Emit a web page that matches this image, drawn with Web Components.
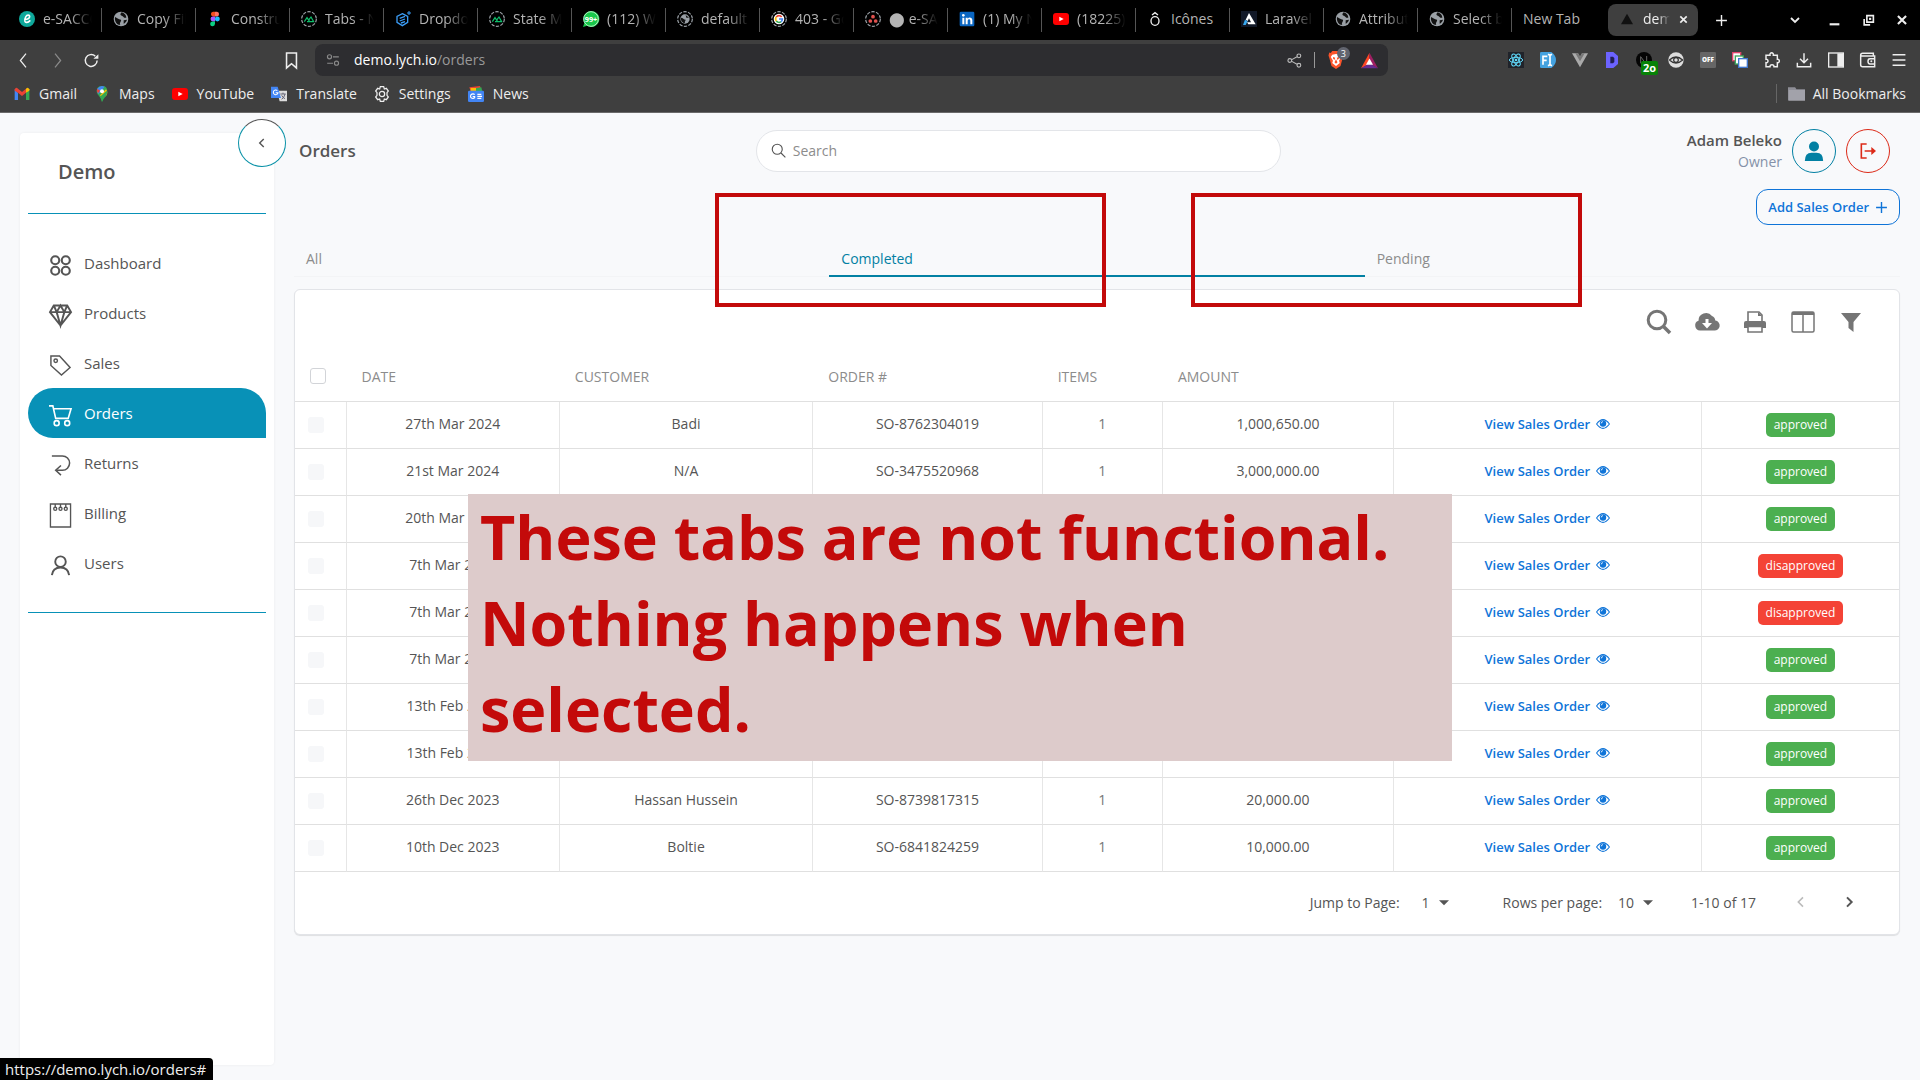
<!DOCTYPE html>
<html lang="en">
<head>
<meta charset="utf-8">
<title>Orders</title>
<style>
html, body { margin: 0; height: 100%; }
body { font-family: "Open Sans", "Noto Sans", sans-serif; font-size: 14px; color: #555; background: #f8f9fb; }
</style>
</head>
<body>
<app-window></app-window>
<script>
const ICONS = {
  // tab strip
  esacco: '<circle cx="12" cy="12" r="12" fill="#0ea89b"/><path d="M8 13c5 0 8-2 8-5 0-2-4-3-6 1s-2 9 2 8c2 0 4-2 5-3" fill="none" stroke="#fff" stroke-width="2.4"/>',
  globe: '<circle cx="12" cy="12" r="11" fill="#9aa0a6"/><path d="M3 9c3 1 5 4 9 4 1 3-3 4-1 8-5 0-9-5-8-12zM13 2c-2 2-3 4 0 5s3 4 7 3c0-4-3-7-7-8zM16 14l5-1c-1 3-3 5-5 6z" fill="#111"/>',
  figma: '<path d="M12 1H9a3.7 3.7 0 0 0 0 7.300h3z" fill="#f24e1e"/><path d="M12 1h3a3.700 3.700 0 0 1 0 7.300h-3z" fill="#ff7262"/><path d="M12 8.300H9a3.700 3.700 0 0 0 0 7.400h3z" fill="#a259ff"/><circle cx="15.500" cy="12" r="3.700" fill="#1abcfe"/><path d="M9 15.700h3v3.600a3.600 3.600 0 1 1-3-3.600z" fill="#0acf83"/>',
  nuxt: '<circle cx="12" cy="12" r="11" fill="none" stroke="#9aa0a6" stroke-width="1.800" stroke-dasharray="5 2"/><path d="M5 16l4-6 4 6M11 14l4-5 4 7H9" fill="none" stroke="#0fbd6b" stroke-width="1.800"/>',
  drop: '<path d="M11 4l8 4v9l-8 5-8-5V8z" fill="none" stroke="#3b9cf5" stroke-width="2"/><path d="M7 11l8-3M7 15l8-3M9 18l6-2" stroke="#3b9cf5" stroke-width="2"/><path d="M21 0v6M18 3h6" stroke="#3b9cf5" stroke-width="1.500"/>',
  whats: '<path d="M12 0a12 12 0 1 1-6 22l-6 2 2-6A12 12 0 0 1 12 0z" fill="#19c84b"/><circle cx="12" cy="12" r="11" fill="none" stroke="#fff" stroke-width="1"/><text x="12" y="16" text-anchor="middle" font-size="11" font-weight="700" fill="#fff">99+</text>',
  dashglobe: '<circle cx="12" cy="12" r="11" fill="none" stroke="#9aa0a6" stroke-width="1.800" stroke-dasharray="5 2"/><circle cx="12" cy="12" r="7" fill="#9aa0a6"/><path d="M6 10c3 0 4 3 7 3 0 2-2 2-1 5-4 0-7-4-6-8zM13 6l5 4-4 0z" fill="#111"/>',
  google: '<circle cx="12" cy="12" r="11" fill="none" stroke="#9aa0a6" stroke-width="1.800" stroke-dasharray="5 2"/><circle cx="12" cy="12" r="8" fill="#fff"/><path d="M16 9a5 5 0 0 0-8 0" fill="none" stroke="#ea4335" stroke-width="2.500"/><path d="M8 9a5 5 0 0 0 0 6" fill="none" stroke="#fbbc05" stroke-width="2.500"/><path d="M8 15a5 5 0 0 0 7 1" fill="none" stroke="#34a853" stroke-width="2.500"/><path d="M12 12h5q0 3-2 4" fill="none" stroke="#4285f4" stroke-width="2.500"/>',
  asana: '<circle cx="12" cy="12" r="11" fill="none" stroke="#9aa0a6" stroke-width="1.800" stroke-dasharray="5 2"/><g fill="#e2524f"><circle cx="12" cy="8.500" r="2.800"/><circle cx="8" cy="15" r="2.800"/><circle cx="16" cy="15" r="2.800"/></g>',
  linkedin: '<rect x="1" y="1" width="22" height="22" rx="2" fill="#0a66c2"/><g fill="#fff"><circle cx="6.500" cy="6.500" r="2"/><path d="M5 10h3v10H5zM10 10h3v1.500c2-3 7-2 7 2.500v6h-3v-5c0-4-4-3-4 0v5h-3z"/></g>',
  youtube: '<rect x="0" y="3" width="24" height="18" rx="4.500" fill="#f00"/><path d="M9.500 8.500l6.500 3.500-6.500 3.500z" fill="#fff"/>',
  icones: '<ellipse cx="12" cy="15" rx="6" ry="6.500" fill="none" stroke="#eee" stroke-width="2"/><path d="M7.500 6l4.500-3.500L16.500 6" fill="none" stroke="#eee" stroke-width="2"/>',
  laravel: '<rect width="24" height="24" fill="#111827"/><path d="M12 3l10 17H11l-2-3h6l-3-6-2 4-3-2z" fill="#fff"/><path d="M6 13l4 2-3 6H3z" fill="#38a8f0"/>',
  tri: '<path d="M12 4l9 16H3z" fill="#111"/>',
  // browser tool bar
  x: '<path d="M5 5l14 14M19 5L5 19" fill="none" stroke="currentColor" stroke-width="3.600"/>',
  plus: '<path d="M12 2v20M2 12h20" fill="none" stroke="currentColor" stroke-width="2.600"/>',
  down: '<path d="M4 8l8 8 8-8" fill="none" stroke="currentColor" stroke-width="3.600"/>',
  min: '<path d="M3 19h18" stroke="currentColor" stroke-width="4"/>',
  restore: '<path d="M9 3h12v12H9z" fill="none" stroke="currentColor" stroke-width="3"/><path d="M4 9v11h11" fill="none" stroke="currentColor" stroke-width="3"/><path d="M13 7h4v4h-4z" fill="currentColor"/>',
  back: '<path d="M16 1L7 12l9 11" fill="none" stroke="currentColor" stroke-width="2"/>',
  fwd: '<path d="M8 1l9 11-9 11" fill="none" stroke="currentColor" stroke-width="2"/>',
  reload: '<path d="M21 12a9.500 9.500 0 1 1-3-7" fill="none" stroke="currentColor" stroke-width="2.300"/><path d="M15 9h8V2z" fill="currentColor"/>',
  mark: '<path d="M5 1.500h14v21l-7-6-7 6z" fill="none" stroke="currentColor" stroke-width="2.200"/>',
  tune: '<g fill="none" stroke="currentColor" stroke-width="2"><circle cx="6" cy="6.500" r="3.500"/><circle cx="18" cy="17.500" r="3.500"/><path d="M12 6.500h10M2 17.500h10"/></g>',
  share: '<g fill="none" stroke="currentColor" stroke-width="1.800"><circle cx="19" cy="4.500" r="3"/><circle cx="4.500" cy="12" r="3"/><circle cx="19" cy="19.500" r="3"/><path d="M7 11l9-5M7 13l9 5"/></g>',
  brave: '<path d="M7 0h10l2 2.500 2-.500 1 4-1 3-3 11-6 4-6-4L3 9 2 6l1-4 2 .500z" fill="#fb542b"/><path d="M12 4l5 1 2 3-3 5 1 3-5 4-5-4 1-3-3-5 2-3z" fill="#fff"/><path d="M8 8l3 1-1 3-2-2zM16 8l-3 1 1 3 2-2zM12 11l2 4-2 2-2-2z" fill="#fb542b"/>',
  bat: '<path d="M12 1L0 23l12-6z" fill="#ff4724"/><path d="M12 1l12 22-12-6z" fill="#9e1f63"/><path d="M0 23h24l-12-7z" fill="#662d91"/><path d="M12 9l5 9H7z" fill="#fff"/>',
  react: '<rect width="24" height="24" fill="#20232a"/><g fill="none" stroke="#61dafb" stroke-width="1.500"><ellipse cx="12" cy="12" rx="10" ry="4"/><ellipse cx="12" cy="12" rx="10" ry="4" transform="rotate(60 12 12)"/><ellipse cx="12" cy="12" rx="10" ry="4" transform="rotate(120 12 12)"/></g><circle cx="12" cy="12" r="2" fill="#61dafb"/>',
  fi: '<path d="M2 0h15q7 5 7 12t-7 12H2q-2 0-2-2V2q0-2 2-2z" fill="#44a2e0"/><g stroke="#fff" fill="none" stroke-width="2.500"><path d="M4.500 19V6.500H11M4.500 12.500H10M15 4v16M12 3.500l3 1.500 3-1.500M12 20.500l3-1.500 3 1.500"/></g>',
  vue: '<path d="M0 2h9l3 5 3-5h9L12 23z" fill="#aaa"/><path d="M5 2h4l3 5 3-5h4l-7 12z" fill="#777"/>',
  dee: '<path d="M3 0h11l7 6v12l-7 6H3z" fill="#6c63ff"/><path d="M9.500 7h4l2 2v6l-2 2h-4z" fill="#222054"/>',
  next: '<circle cx="12" cy="12" r="12" fill="#050505"/><path d="M7 17V7l9 12M16 6v8" fill="none" stroke="#666" stroke-width="1.500"/>',
  eyeball: '<circle cx="12" cy="12" r="11.500" fill="#ddd"/><path d="M2 12q10-9 20 0-10 9-20 0" fill="none" stroke="#333" stroke-width="1.800"/><circle cx="12" cy="12" r="3.500" fill="none" stroke="#333" stroke-width="1.800"/>',
  off: '<rect width="24" height="24" rx="2" fill="#666"/><text x="12" y="15.500" text-anchor="middle" font-size="9.500" font-weight="800" fill="#fff">OFF</text>',
  layers: '<g fill="#fff" stroke-width="2"><rect x="1" y="1" width="12" height="12" stroke="#e0456b"/><rect x="5" y="6" width="12" height="12" stroke="#41a85f"/><rect x="10" y="10" width="13" height="13" stroke="#3f77d0"/></g>',
  puzzle: '<path d="M3 5h6c-1-5 6-5 5 0h6v6c4-1 4 6 0 5v6h-5c0-4-6-4-6 0H3v-6c4 1 4-6 0-5z" fill="none" stroke="currentColor" stroke-width="2.200"/>',
  dl: '<path d="M12 2v13M6 10l6 6 6-6M2 16v6h20v-6" fill="none" stroke="currentColor" stroke-width="2.200"/>',
  side: '<rect x="1" y="1.500" width="22" height="21" fill="none" stroke="currentColor" stroke-width="2"/><path d="M14 2h9v20h-9z" fill="currentColor"/>',
  wallet: '<g fill="none" stroke="currentColor" stroke-width="2.200"><path d="M20 6V2H4Q1 2 1 5v14q0 3 3 3h18V6H4Q1 6 1 4"/><path d="M22 10h-7q-3 0-3 4t3 4h7"/></g><circle cx="17" cy="14" r="1.500" fill="currentColor"/>',
  menu: '<path d="M1 3h22M1 12h22M1 21h22" stroke="currentColor" stroke-width="2.200"/>',
  gmail: '<path d="M1 5v16h5V10z" fill="#4285f4"/><path d="M23 5v16h-5V10z" fill="#34a853"/><path d="M1 5q2-4 5-1l6 5 6-5v6l-6 5-6-5-5-3z" fill="#ea4335"/><path d="M18 4q3-3 5 1v2l-5 3z" fill="#fbbc04"/>',
  maps: '<path d="M12 0q8 0 8 8c0 6-6 7-8 16-2-9-8-10-8-16q0-8 8-8z" fill="#34a853"/><path d="M5 4q3-4 7-4l4 1-9 11q-4-4-2-8z" fill="#4285f4"/><path d="M5 4l4 3-3 4q-3-4-1-7z" fill="#ea4335"/><path d="M9 14l9-9q4 5 0 10l-6 3z" fill="#fbbc04"/><path d="M12 24q0-4-3-8l10-9q2 4-2 9-3 3-5 8z" fill="#34a853"/><circle cx="12" cy="8" r="3" fill="#fff"/>',
  translate: '<path d="M9 7h15v16H13z" fill="#ddd"/><path d="M14 12h8M18 10v2M16 20q4-3 5-8M16 14q2 4 5 5" stroke="#667" fill="none" stroke-width="1.500"/><path d="M0 1h10l5 17H0z" fill="#4285f4"/><path d="M9.500 7a3.500 3.500 0 1 0 1 3H7" fill="none" stroke="#fff" stroke-width="1.600"/>',
  gear: '<g fill="none" stroke="currentColor" stroke-width="1.900"><path d="M9.500 1h5l1 3.500 3-1 3 4-2 2.500v4l2 2.500-3 4-3-1-1 3.500h-5l-1-3.500-3 1-3-4L4.500 14v-4l-2-2.500 3-4 3 1z"/><circle cx="12" cy="12" r="4"/></g>',
  news: '<path d="M2 2l16-2 2 8H4z" fill="#ea4335"/><path d="M6 4l14-2 2 8H4z" fill="#34a853"/><path d="M4 3h8v6H4z" fill="#fbbc04"/><rect y="7" width="24" height="17" rx="2" fill="#4285f4"/><path d="M10 13a3.500 3.500 0 1 0 0 4.500V16H7M14 12.500h6M14 15.500h7M14 18.500h6" fill="none" stroke="#fff" stroke-width="1.700"/>',
  folder: '<path d="M0 3h10l2 3h12v16H0z" fill="#8e8e96"/><path d="M1 7h23v15H1z" fill="#a2a2aa"/>',
  // application
  grid: '<g fill="none" stroke="currentColor" stroke-width="2.200"><circle cx="6.500" cy="6.500" r="4.200"/><circle cx="17.500" cy="6.500" r="4.200"/><circle cx="6.500" cy="17.500" r="4.200"/><circle cx="17.500" cy="17.500" r="4.200"/></g>',
  gem: '<g fill="none" stroke="currentColor" stroke-width="2"><path d="M5 1.500h14l4 7L12 22.500 1 8.500zM1 8.500h22M5 1.500l3 7 4 14 4-14 3-7M8 8.500l4-7 4 7"/></g>',
  tag: '<g fill="none" stroke="currentColor" stroke-width="1.500"><path d="M2 2h9l11 12-9 8L2 12z"/><circle cx="7" cy="7" r="1.800"/></g>',
  cart: '<g fill="none" stroke="currentColor" stroke-width="1.700"><path d="M0 2h4l3 13h13l3-10H5"/><circle cx="8" cy="20" r="2.600"/><circle cx="19" cy="20" r="2.600"/></g>',
  ret: '<g fill="none" stroke="currentColor" stroke-width="1.600"><path d="M3 2h11a7.500 7.500 0 0 1 0 15H8"/><path d="M12.500 12L7 17l5.500 5"/></g>',
  bill: '<g fill="none" stroke="currentColor" stroke-width="1.400"><path d="M1.500 0h21v24h-21z"/><circle cx="6.500" cy="5" r="1.600"/><circle cx="12" cy="5" r="1.600"/><circle cx="17.500" cy="5" r="1.600"/><path d="M6.500 0v3M12 0v3M17.500 0v3"/></g>',
  user: '<g fill="none" stroke="currentColor" stroke-width="2"><circle cx="12" cy="8" r="5.500"/><path d="M3 22q1-8 9-8t9 8"/></g>',
  chevL: '<path d="M15 5l-7 7 7 7" fill="none" stroke="currentColor" stroke-width="2.400"/>',
  chevR: '<path d="M9 5l7 7-7 7" fill="none" stroke="currentColor" stroke-width="3"/>',
  lens: '<g fill="none" stroke="currentColor" stroke-width="1.800"><circle cx="10" cy="10" r="8"/><path d="M16 16l7 7"/></g>',
  person: '<circle cx="12" cy="6.500" r="6" fill="currentColor"/><path d="M1 24q0-10 8-10h6q8 0 8 10z" fill="currentColor"/>',
  logout: '<g fill="none" stroke="currentColor" stroke-width="2.400"><path d="M10 1.500H2v21h8M7 12h14"/></g><path d="M17 6l7 6-7 6z" fill="currentColor"/>',
  search: '<g fill="none" stroke="currentColor"><circle cx="10" cy="10" r="8.800" stroke-width="3"/><path d="M16.500 16.500l6.500 6.500" stroke-width="3.600"/></g>',
  cloud: '<path d="M5 20.500a5 5 0 0 1-1.500-9.700A7.500 7.500 0 0 1 17 6q3 1 3.300 4.500A5 5 0 0 1 19 20.500z" fill="currentColor"/><path d="M10.500 9h3v4H17l-5 5.500L7 13h3.500z" fill="#fff"/>',
  print: '<path d="M5 11V2h11l3 3v6" fill="none" stroke="currentColor" stroke-width="1.600"/><path d="M15 2v4h4z" fill="currentColor"/><path d="M3 11h18q2 0 2 2v5h-4v-2H5v2H1v-5q0-2 2-2z" fill="currentColor"/><path d="M5 16.500h14V22H5z" fill="#fff" stroke="currentColor" stroke-width="1.600"/>',
  cols: '<g fill="none" stroke="currentColor" stroke-width="1.500"><rect x="1" y="2" width="22" height="20" rx="1.500"/><path d="M12 4v18"/></g><path d="M1 2h22v3H1z" fill="currentColor"/>',
  funnel: '<path d="M2 3h20l-7.500 9v10l-5-4v-6z" fill="currentColor"/>',
  eye: '<path d="M1 12Q12-3 23 12 12 27 1 12z" fill="none" stroke="currentColor" stroke-width="1.800"/><circle cx="12" cy="11" r="5.500" fill="currentColor"/><path d="M9 11q0-3 3-3" fill="none" stroke="#fff" stroke-width="1.400"/>',
  caret: '<path d="M0 8h24L12 20z" fill="currentColor"/>'
};
const icon = (name, size, label) =>
  `<app-icon name="${name}" style="--size:${size}px"${label ? ` title="${label}"` : ''}></app-icon>`;

const RESET = `
  *, *::before, *::after { box-sizing: border-box; }
  button { font: inherit; color: inherit; background: none; border: 0; padding: 0; margin: 0; display: inline-flex; align-items: center; justify-content: center; }
  a { color: inherit; text-decoration: none; }
`;
class Base extends HTMLElement {
  connectedCallback() {
    if (this.shadowRoot) return;
    const t = document.createElement('template');
    t.innerHTML = `<style>${RESET}${this.css()}</style>${this.html()}`;
    this.attachShadow({ mode: 'open' }).append(t.content.cloneNode(true));
  }
  attr(n) { return this.getAttribute(n) || ''; }
}

customElements.define('app-icon', class extends Base {
  css() { return `:host { display: inline-flex; flex: none; width: var(--size, 16px); height: var(--size, 16px); } svg { width: 100%; height: 100%; overflow: visible; }`; }
  html() { return `<svg viewBox="0 0 24 24" aria-hidden="true">${ICONS[this.attr('name')]}</svg>`; }
});

customElements.define('browser-tab', class extends Base {
  css() { return `
    :host { display: block; flex: 0 0 94px; min-width: 0; height: 24px; border-right: 1px solid #555; color: #b4b4b4; }
    :host([last]) { border-color: transparent; }
    :host([active]) { flex-basis: 90px; height: 32px; margin-left: 2px; border: 0; border-radius: 8px; background: #3f3f3f; color: #eee; }
    .tab { width: 100%; height: 100%; padding: 0 9px 2px 11px; gap: 8px; justify-content: flex-start; }
    .label { flex: 1; overflow: hidden; white-space: nowrap; text-align: left; line-height: 20px; mask-image: linear-gradient(90deg, #000 55%, transparent); }
    :host([plain]) .label { mask-image: none; }
  `; }
  html() {
    return `<button class="tab">${this.attr('icon') ? icon(this.attr('icon'), 16) : ''}<span class="label"><slot></slot></span>${this.hasAttribute('active') ? icon('x', 11) : ''}</button>`;
  }
});

customElements.define('browser-chrome', class extends Base {
  css() { return `
    :host { display: block; flex: none; background: #3f3f3f; color: #eee; border-bottom: 1px solid #6a6a6a; }
    .strip { display: flex; align-items: center; height: 40px; padding-left: 8px; background: #000; }
    .new { width: 46px; }
    .win { margin-left: auto; display: flex; align-items: center; gap: 20px; padding-right: 11px; }
    .win button { width: 14px; }
    .win button:first-child { margin-right: 5px; }
    .bar { display: flex; align-items: center; height: 40px; padding: 0 14px 0 14px; }
    .nav { display: flex; gap: 16px; width: 269px; }
    .nav button { width: 18px; }
    .dim { color: #8a8a8a; display: flex; }
    .url { flex: none; width: 1072px; width: 56.7%; height: 32px; margin-left: 15px; padding: 0 10px 0 11px; border-radius: 8px; background: #2d2d30; display: flex; align-items: center; gap: 14px; }
    .url .text { flex: 1; color: #fff; white-space: nowrap; padding-bottom: 2px; }
    .url .text span { color: #999; }
    .tools { display: flex; align-items: center; gap: 12px; color: #bbb; }
    .line { width: 1px; height: 16px; background: #999; }
    .shield { position: relative; display: flex; margin-right: 4px; color: #fff; }
    .shield b { position: absolute; left: 10px; top: -4px; width: 13px; height: 13px; border-radius: 7px; background: #62656f; font-size: 9px; font-weight: 400; line-height: 13px; text-align: center; }
    .ext { margin-left: auto; display: flex; gap: 16px; }
    .ext button { position: relative; }
    .ext b { position: absolute; left: 5px; top: 9px; padding: 0 2px; background: #078207; color: #fff; font-size: 11px; line-height: 14px; border-radius: 2px; }
    .marks { display: flex; align-items: center; height: 32px; padding: 0 14px 5px; gap: 17px; }
    .marks a { display: flex; align-items: center; gap: 9px; white-space: nowrap; }
    .marks .all { margin-left: auto; padding-left: 11px; gap: 8px; border-left: 1px solid #666; }
  `; }
  html() {
    const tabs = [['esacco','e-SACCO'],['globe','Copy File'],['figma','Construct'],['nuxt','Tabs - Nuxt'],['drop','Dropdown'],['nuxt','State Man'],['whats','(112) Wh'],['dashglobe','default -'],['google','403 - Goo'],['asana','⬤ e-SACC'],['linkedin','(1) My Net'],['youtube','(18225) Y'],['icones','Icônes'],['laravel','Laravel -'],['globe','Attribute'],['globe','Select box']];
    return `
    <div class="strip">
      ${tabs.map(([i, t]) => `<browser-tab icon="${i}"${i === 'icones' ? ' plain' : ''}>${t}</browser-tab>`).join('')}
      <browser-tab plain last>New Tab</browser-tab>
      <browser-tab active icon="tri">demo</browser-tab>
      <button class="new" aria-label="New tab">${icon('plus', 13)}</button>
      <div class="win"><button>${icon('down', 12)}</button><button>${icon('min', 13)}</button><button>${icon('restore', 13)}</button><button>${icon('x', 14)}</button></div>
    </div>
    <div class="bar">
      <div class="nav"><button>${icon('back', 15)}</button><button class="dim">${icon('fwd', 15)}</button><button>${icon('reload', 15)}</button></div>
      <button>${icon('mark', 17)}</button>
      <div class="url"><span class="dim">${icon('tune', 14)}</span><div class="text" role="textbox" aria-label="Address">demo.lych.io<span>/orders</span></div>
        <div class="tools">${icon('share', 15)}<i class="line"></i><span class="shield">${icon('brave', 18)}<b>3</b></span>${icon('bat', 17)}</div></div>
      <div class="ext">
        ${['react','fi','vue','dee'].map(n => `<button>${icon(n, 16)}</button>`).join('')}
        <button>${icon('next', 16)}<b>2o</b></button>
        ${['eyeball','off','layers','puzzle','dl','side','wallet','menu'].map(n => `<button>${icon(n, n === 'menu' ? 14 : 16)}</button>`).join('')}
      </div>
    </div>
    <div class="marks">
      ${[['gmail','Gmail'],['maps','Maps'],['youtube','YouTube'],['translate','Translate'],['gear','Settings'],['news','News']].map(([i, t]) => `<a href="#">${icon(i, 16)}<span>${t}</span></a>`).join('')}
      <a class="all" href="#">${icon('folder', 17)}<span>All Bookmarks</span></a>
    </div>`;
  }
});

customElements.define('nav-item', class extends Base {
  css() { return `
    :host { display: block; }
    a { display: flex; align-items: center; gap: 12px; height: 50px; padding: 0 21px; font-size: 15px; }
    app-icon { margin-top: 4px; }
    :host([active]) a { background: #0891b7; color: #fff; border-radius: 25px 25px 0 25px; }
  `; }
  html() { return `<a href="#">${icon(this.attr('icon'), 23)}<slot></slot></a>`; }
});

customElements.define('side-bar', class extends Base {
  css() { return `
    :host { display: block; position: relative; flex: 0 0 254px; margin: 20px 0 15px 20px; padding: 0 8px; background: #fff; border-radius: 4px; box-shadow: 0 0 3px rgba(0,0,0,.06); }
    h1 { margin: 0; height: 80px; padding-left: 30px; font-size: 20px; font-weight: 600; line-height: 78px; }
    nav { border: solid #0891b7; border-width: 1px 0; padding: 24px 0; }
    .fold { position: absolute; top: -14px; right: -12px; width: 48px; height: 48px; border: 1px solid #0891a7; border-top-color: #555; border-radius: 24px; background: #fff; }
  `; }
  html() {
    return `<h1>Demo</h1><button class="fold" aria-label="Collapse">${icon('chevL', 14)}</button>
    <nav>
      <nav-item icon="grid">Dashboard</nav-item><nav-item icon="gem">Products</nav-item><nav-item icon="tag">Sales</nav-item>
      <nav-item icon="cart" active>Orders</nav-item><nav-item icon="ret">Returns</nav-item><nav-item icon="bill">Billing</nav-item><nav-item icon="user">Users</nav-item>
    </nav>`;
  }
});

customElements.define('page-header', class extends Base {
  css() { return `
    :host { display: grid; grid-template-columns: 28.75% 32.7% 1fr; align-items: center; height: 44px; }
    h2 { margin: 0; padding: 0 0 2px 5px; font-size: 17px; font-weight: 600; }
    label { display: flex; align-items: center; gap: 7px; height: 42px; padding: 0 14px 1px; border: 1px solid #e3e5e9; border-radius: 21px; background: #fff; }
    input { flex: 1; border: 0; outline: 0; background: none; font: inherit; padding: 0; }
    input::placeholder { color: #8c8c8c; opacity: 1; }
    .me { display: flex; align-items: center; justify-content: flex-end; gap: 10px; padding-right: 10px; }
    .who { text-align: right; line-height: 22px; }
    .who b { display: block; font-size: 15px; font-weight: 600; }
    .who span { display: block; color: #8491a8; }
    .round { width: 44px; height: 44px; border: 1px solid; border-radius: 22px; color: #0280a3; }
    .out { color: #dc2a18; }
  `; }
  html() {
    return `<h2>Orders</h2>
    <label>${icon('lens', 15)}<input type="search" placeholder="Search" aria-label="Search"></label>
    <div class="me"><div class="who"><b>Adam Beleko</b><span>Owner</span></div>
      <button class="round" aria-label="Profile">${icon('person', 20)}</button><button class="round out" aria-label="Log out">${icon('logout', 16)}</button></div>`;
  }
});

customElements.define('tab-list', class extends Base {
  css() { return `
    :host { display: grid; grid-template-columns: repeat(3, 1fr); margin-top: 16px; height: 36px; border-bottom: 1px solid #f3f4f6; }
    button { height: 36px; padding: 0 12px; justify-content: flex-start; color: #8c8c8c; border-bottom: 2px solid transparent; }
    .on { color: #0280a3; border-color: #0280a3; }
  `; }
  html() { return `<button role="tab">All</button><button role="tab" class="on" aria-selected="true">Completed</button><button role="tab">Pending</button>`; }
});

customElements.define('status-badge', class extends Base {
  css() { return `:host { display: inline-block; padding: 0 8px; border-radius: 5px; background: #4caf50; color: #fff; font-size: 12px; line-height: 24px; vertical-align: middle; } :host([kind=disapproved]) { background: #f44336; }`; }
  html() { return `<slot></slot>`; }
});

customElements.define('orders-table', class extends Base {
  css() { return `
    :host { display: block; margin-top: 12px; background: #fff; border: 1px solid #e2e4e8; border-radius: 6px; box-shadow: 0 1px 1px rgba(0,0,0,.1); }
    .tools { display: flex; justify-content: flex-end; align-items: center; gap: 24px; height: 63px; padding-right: 36px; color: #757575; }
    table { width: 100%; table-layout: fixed; border-collapse: separate; border-spacing: 0; }
    th { height: 49px; padding: 0 16px 2px; text-align: left; font-weight: 400; color: #8c8c8c; border-bottom: 1px solid #e0e0e0; }
    th:first-child { padding-left: 15px; }
    td { height: 47px; padding: 0 0 3px; text-align: center; border-bottom: 1px solid #e0e0e0; border-left: 1px solid #e6e6e6; white-space: nowrap; }
    td:first-child { border-left: 0; text-align: left; }
    td:first-child, td:last-child { padding: 0; }
    input { appearance: none; display: block; width: 16px; height: 16px; margin: 0; border: 1px solid #d2d4d8; border-radius: 3px; background: #fff; }
    td input { margin-left: 13px; border: 0; background: #f6f7f9; }
    td a { display: inline-flex; align-items: center; gap: 6px; color: #0f74d8; font-size: 13px; font-weight: 600; }
    .items { color: #777; }
    footer { display: flex; align-items: center; justify-content: flex-end; height: 62px; padding: 0 42px 2px 0; }
    label { display: flex; align-items: center; gap: 16px; }
    .pick { display: flex; align-items: center; gap: 2px; }
    select { appearance: none; border: 0; background: none; font: inherit; color: inherit; padding: 0 6px 0 0; }
    .jump { margin-right: 54px; } .jump .pick { margin-left: 6px; }
    .rows { margin-right: 38px; }
    .range { margin-right: 37px; }
    footer button { width: 16px; } .prev { color: #bbb; margin-right: 32px; }
  `; }
  html() {
    const rows = [
      ['27th Mar 2024','Badi','SO-8762304019','1','1,000,650.00',1],
      ['21st Mar 2024','N/A','SO-3475520968','1','3,000,000.00',1],
      ['20th Mar 2024','','','','',1], ['7th Mar 2024','','','','',0], ['7th Mar 2024','','','','',0], ['7th Mar 2024','','','','',1],
      ['13th Feb 2024','','','','',1], ['13th Feb 2024','','','','',1],
      ['26th Dec 2023','Hassan Hussein','SO-8739817315','1','20,000.00',1],
      ['10th Dec 2023','Boltie','SO-6841824259','1','10,000.00',1]];
    return `<div class="tools">${['search','cloud','print','cols','funnel'].map(n => `<button aria-label="${n}">${icon(n, 24)}</button>`).join('')}</div>
    <table>
      <colgroup>${[3.15,13.3,15.8,14.3,7.5,14.4,19.2,12.35].map(w => `<col style="width:${w}%">`).join('')}</colgroup>
      <thead><tr><th><input type="checkbox" aria-label="Select all"></th><th>DATE</th><th>CUSTOMER</th><th>ORDER #</th><th>ITEMS</th><th>AMOUNT</th><th></th><th></th></tr></thead>
      <tbody>${rows.map(r => `<tr><td><input type="checkbox" disabled aria-label="Select row"></td><td>${r[0]}</td><td>${r[1]}</td><td>${r[2]}</td><td class="items">${r[3]}</td><td>${r[4]}</td>
        <td><a href="#">View Sales Order ${icon('eye', 14)}</a></td><td>${r[5] ? '<status-badge>approved</status-badge>' : '<status-badge kind="disapproved">disapproved</status-badge>'}</td></tr>`).join('')}</tbody>
    </table>
    <footer>
      <label class="jump">Jump to Page: <span class="pick"><select><option>1</option></select>${icon('caret', 10)}</span></label>
      <label class="rows">Rows per page: <span class="pick"><select><option>10</option></select>${icon('caret', 10)}</span></label>
      <span class="range">1-10 of 17</span>
      <button class="prev" aria-label="Previous page">${icon('chevL', 16)}</button><button aria-label="Next page">${icon('chevR', 16)}</button>
    </footer>`;
  }
});

customElements.define('note-frame', class extends Base {
  css() { return `:host { display: block; position: absolute; width: 391px; height: 114px; border: 4px solid #c30a0a; pointer-events: none; }`; }
  html() { return ''; }
});
customElements.define('note-card', class extends Base {
  css() { return `:host { display: block; position: absolute; width: 984px; height: 267px; padding: 0 12px; background: #ddcbcb; color: #c30a0a; font-size: 61px; font-weight: 700; line-height: 86px; }`; }
  html() { return `<slot></slot>`; }
});

customElements.define('app-window', class extends Base {
  css() { return `
    :host { position: relative; display: flex; flex-direction: column; min-height: 100vh; overflow: hidden; }
    .page { flex: 1; display: flex; }
    main { flex: 1; min-width: 0; padding: 16px 20px 0; }
    .actions { display: flex; justify-content: flex-end; margin-top: 16px; }
    .add { height: 36px; padding: 0 11px; gap: 6px; border: 1px solid #0f74d8; border-radius: 12px; color: #0f74d8; font-size: 13px; font-weight: 600; }
    .status { position: absolute; left: 0; bottom: 0; padding: 0 7px 0 5px; background: #000; color: #eee; font-size: 15px; line-height: 22px; border-top-right-radius: 4px; }
  `; }
  html() {
    return `<browser-chrome></browser-chrome>
    <div class="page"><side-bar></side-bar>
      <main><page-header></page-header>
        <div class="actions"><button class="add">Add Sales Order ${icon('plus', 13)}</button></div>
        <tab-list role="tablist"></tab-list><orders-table></orders-table>
      </main></div>
    <note-frame style="left:715px;top:193px"></note-frame><note-frame style="left:1191px;top:193px"></note-frame>
    <note-card style="left:468px;top:494px">These tabs are not functional.<br>Nothing happens when<br>selected.</note-card>
    <div class="status">https://demo.lych.io/orders#</div>`;
  }
});
</script>
</body>
</html>
